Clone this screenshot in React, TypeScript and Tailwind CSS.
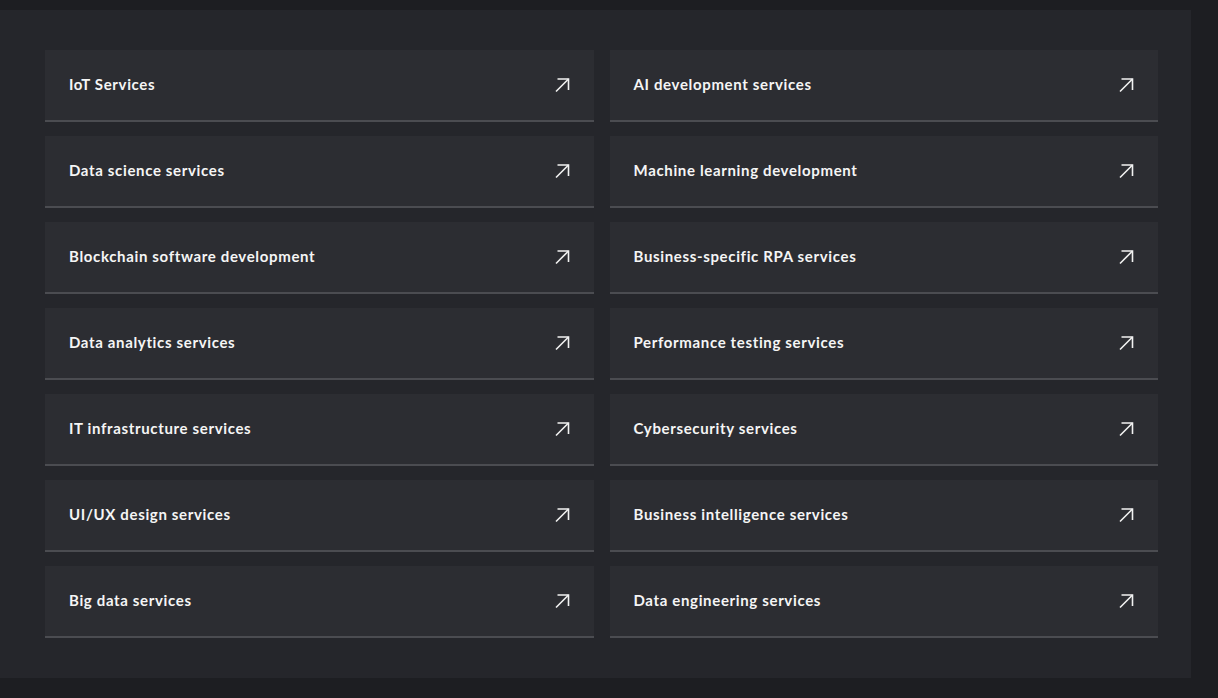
import React from 'react';

const services = [
  'IoT Services',
  'AI development services',
  'Data science services',
  'Machine learning development',
  'Blockchain software development',
  'Business-specific RPA services',
  'Data analytics services',
  'Performance testing services',
  'IT infrastructure services',
  'Cybersecurity services',
  'UI/UX design services',
  'Business intelligence services',
  'Big data services',
  'Data engineering services',
];

function ArrowIcon() {
  return (
    <svg width="16" height="16" viewBox="0 0 16 16" fill="none" className="shrink-0">
      <path d="M2 14.5 L14.5 2" stroke="#f2f2f2" strokeWidth="1.6" />
      <path d="M3.5 2 H14.5 V13" stroke="#f2f2f2" strokeWidth="1.6" />
    </svg>
  );
}

export default function App() {
  return (
    <div className="min-h-[698px] bg-[#1d1e22] pt-[10px] pr-[27px] pb-[20px]" style={{ fontFamily: 'Lato, "Noto Sans", sans-serif' }}>
      <div className="bg-[#25262b] pl-[45px] pr-[33px] py-[40px]">
        <div className="grid grid-cols-2 gap-x-4 gap-y-[14px]">
          {services.map((s) => (
            <a
              key={s}
              href="#"
              className="flex h-[72px] items-center justify-between bg-[#2c2d32] border-b-2 border-[#4b4c51] px-6 pb-[1px]"
            >
              <span className="text-[15px] font-bold tracking-[0.65px] text-[#f5f5f5]">{s}</span>
              <ArrowIcon />
            </a>
          ))}
        </div>
      </div>
    </div>
  );
}
